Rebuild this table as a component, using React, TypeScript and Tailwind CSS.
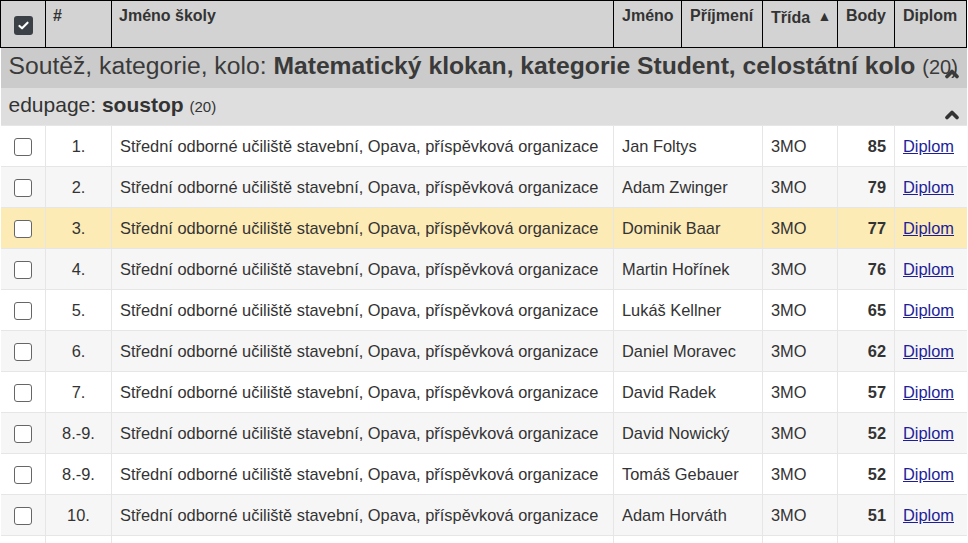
import { ChevronUp } from 'lucide-react';

type Row = { rank: string; first: string; last: string; points: number; active?: boolean };

const SCHOOL = 'Střední odborné učiliště stavební, Opava, příspěvková organizace';

const rows: Row[] = [
  { rank: '1.', first: 'Jan', last: 'Foltys', points: 85 },
  { rank: '2.', first: 'Adam', last: 'Zwinger', points: 79 },
  { rank: '3.', first: 'Dominik', last: 'Baar', points: 77, active: true },
  { rank: '4.', first: 'Martin', last: 'Hořínek', points: 76 },
  { rank: '5.', first: 'Lukáš', last: 'Kellner', points: 65 },
  { rank: '6.', first: 'Daniel', last: 'Moravec', points: 62 },
  { rank: '7.', first: 'David', last: 'Radek', points: 57 },
  { rank: '8.-9.', first: 'David', last: 'Nowický', points: 52 },
  { rank: '8.-9.', first: 'Tomáš', last: 'Gebauer', points: 52 },
  { rank: '10.', first: 'Adam', last: 'Horváth', points: 51 },
  // next row only peeks in at the bottom edge
  { rank: '', first: '', last: '', points: 0 },
];

function Box() {
  return <span className="inline-block size-[18px] rounded-[3px] border-[1.5px] border-[#666] bg-white align-middle" />;
}

function CheckedBox() {
  return (
    <span className="inline-flex size-[19px] items-center justify-center rounded-[3px] bg-[#3b4046] align-middle">
      <svg viewBox="0 0 16 16" className="size-[13px]" fill="none" stroke="white" strokeWidth="2.6" strokeLinecap="round" strokeLinejoin="round">
        <path d="M3 8.5l3.2 3L13 4.5" />
      </svg>
    </span>
  );
}

const th = 'border border-black px-2 pt-[5px] text-left align-top whitespace-nowrap text-[16px] leading-[20px] font-bold text-[#333]';
const td = 'border-y border-[#e6e6e6] px-2 align-middle';

export default function App() {
  return (
    <div className="w-[968px] overflow-hidden bg-white font-['Liberation_Sans',Arial,sans-serif] text-[#333]">
      <table className="w-[966px] table-fixed border-collapse">
        <colgroup>
          <col className="w-[45px]" />
          <col className="w-[66px]" />
          <col className="w-[502px]" />
          <col className="w-[68px]" />
          <col className="w-[81px]" />
          <col className="w-[75px]" />
          <col className="w-[57px]" />
          <col className="w-[72px]" />
        </colgroup>
        <thead>
          <tr className="h-[47px] bg-[#d3d3d3]">
            <th className="border border-black pt-[6px] text-center align-top">
              <span className="mt-[6px] inline-block"><CheckedBox /></span>
            </th>
            <th className={`${th} !px-[7px]`}>#</th>
            <th className={`${th} !pl-[7px]`}>Jméno školy</th>
            <th className={th}>Jméno</th>
            <th className={th}>Příjmení</th>
            <th className={`${th} !pr-0`}>
              Třída <span className="ml-[3px] align-[2px] text-[14px]">▲</span>
            </th>
            <th className={th}>Body</th>
            <th className={th}>Diplom</th>
          </tr>
        </thead>
        <tbody>
          <tr className="h-[40px] bg-[#cbcbcb]">
            <td colSpan={8} className="relative whitespace-nowrap px-2 pb-[3px] text-[24.7px] leading-none text-[#3a3a3a]">
              Soutěž, kategorie, kolo: <b>Matematický klokan, kategorie Student, celostátní kolo</b>{' '}
              <span className="text-[20px]">(20)</span>
              <ChevronUp className="absolute right-[5px] bottom-[4px] size-[20px]" strokeWidth={4.5} />
            </td>
          </tr>
          <tr className="h-[38px] bg-[#dedede]">
            <td colSpan={8} className="relative px-2 pb-[1px] text-[21px] leading-[24px] text-[#333]">
              edupage: <b>soustop</b> <span className="text-[15px]">(20)</span>
              <ChevronUp className="absolute right-[5px] bottom-[0px] size-[20px]" strokeWidth={4.5} />
            </td>
          </tr>
          {rows.map((r, i) => (
            <tr
              key={i}
              className={`h-[41px] text-[16.4px] ${r.active ? 'bg-[#fdebb6]' : i % 2 ? 'bg-[#f6f6f6]' : 'bg-white'}`}
            >
              <td className={`${td} border-r text-center`}>
                {r.first && <Box />}
              </td>
              <td className={`${td} border-r text-center`}>{r.rank}</td>
              <td className={`${td} border-r whitespace-nowrap`}>{r.first && SCHOOL}</td>
              <td className={`${td} border-r whitespace-nowrap`} colSpan={2}>
                {r.first && `${r.first} ${r.last}`}
              </td>
              <td className={`${td} border-r`}>{r.first && '3MO'}</td>
              <td className={`${td} border-r text-right font-bold`}>{r.first && r.points}</td>
              <td className={td}>
                {r.first && (
                  <a href="#" className="text-[#1e1e9a] underline">
                    Diplom
                  </a>
                )}
              </td>
            </tr>
          ))}
        </tbody>
      </table>
    </div>
  );
}
